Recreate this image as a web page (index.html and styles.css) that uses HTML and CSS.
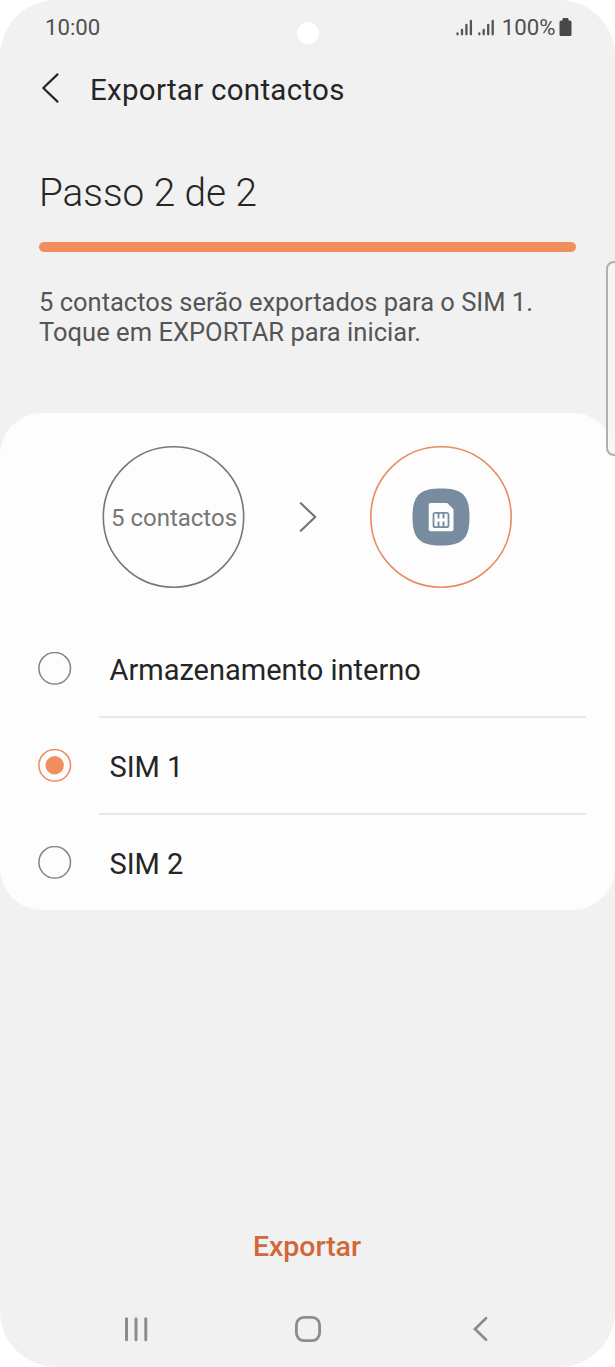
FILE: index.html
```html
<!DOCTYPE html>
<html lang="pt">
<head>
<meta charset="utf-8">
<title>Exportar contactos</title>
<link rel="stylesheet" href="styles.css">
</head>
<body>
<div class="phone">
  <div class="status">
    <span class="time">10:00</span>
    <div class="status-right">
      <svg class="signals" width="38" height="18" viewBox="0 0 38 18" fill="none" stroke="#555" stroke-width="2.300" stroke-linecap="round">
        <path d="M1.500 14.500v.800M6 10.800v4.500M10.400 6v9.300M14.900 2v13.300M23.300 14.500v.800M27.700 10.800v4.500M32.200 6v9.300M36.700 2v13.300"/>
      </svg>
      <span class="percent">100%</span>
      <svg class="battery" width="13" height="18" viewBox="0 0 13 18" fill="#474747">
        <path d="M4.500 0h4q1 0 1 1v1.500h1.500q1.500 0 1.500 1.500v12.500q0 1.500-1.500 1.500H2Q.5 18 .5 16.500V4Q.5 2.500 2 2.500h1.500V1q0-1 1-1z"/>
      </svg>
    </div>
  </div>
  <header class="header">
    <svg class="back" width="19" height="32" viewBox="0 0 19 32" fill="none" stroke="#252525" stroke-width="2.200" stroke-linecap="round" stroke-linejoin="round"><path d="M16.500 2.400 2.300 16l14.200 13.600"/></svg>
    <h1 class="title">Exportar contactos</h1>
  </header>
  <section class="intro">
    <h2 class="step">Passo 2 de 2</h2>
    <div class="progress"></div>
    <p class="desc"><span class="line">5 contactos serão exportados para o SIM 1.</span><span class="line line-b">Toque em EXPORTAR para iniciar.</span></p>
  </section>
  <main class="card">
    <div class="transfer">
      <div class="circle">
        <svg class="ring" width="143" height="142" viewBox="0 0 143 142"><circle cx="71.500" cy="71" r="70.200" fill="none" stroke="#777" stroke-width="1.600"/></svg>
        <span class="count">5 contactos</span>
      </div>
      <svg class="arrow" width="20" height="32" viewBox="0 0 20 32" fill="none" stroke="#727272" stroke-width="2.100" stroke-linecap="round" stroke-linejoin="round"><path d="M2.800 2.300 17.200 16 2.800 29.700"/></svg>
      <div class="circle">
        <svg class="ring" width="142" height="142" viewBox="0 0 142 142"><circle cx="71" cy="71" r="70.200" fill="none" stroke="#e98b60" stroke-width="1.600"/></svg>
        <svg class="sim" width="58" height="58" viewBox="0 0 58 58">
          <path fill="#798b9f" d="M29 .5C50.500.5 57.500 7.500 57.500 29S50.500 57.500 29 57.500.5 50.500.5 29 7.500.5 29 .5z"/>
          <path fill="#fcfdff" d="M18.700 15h16.500l6.300 6.300V41.200q0 2-2 2H18.700q-2 0-2-2V17q0-2 2-2z"/>
          <rect x="21.500" y="24.800" width="15" height="14.400" rx="2" fill="none" stroke="#798b9f" stroke-width="1.800"/>
          <path d="M26.500 25v5.400M31.500 25v5.400M26.500 33.400V39M31.500 33.400V39" fill="none" stroke="#798b9f" stroke-width="1.900"/>
        </svg>
      </div>
    </div>
    <ul class="options">
      <li class="option">
        <svg class="radio" width="34" height="34" viewBox="0 0 34 34"><circle class="radio-ring" cx="16.700" cy="16.300" r="15.800"/></svg>
        <span class="label">Armazenamento interno</span>
      </li>
      <li class="option checked">
        <svg class="radio" width="34" height="34" viewBox="0 0 34 34"><circle class="radio-ring" cx="16.700" cy="16.300" r="15.800"/><circle class="radio-dot" cx="16.700" cy="16.300" r="9.200"/></svg>
        <span class="label">SIM 1</span>
      </li>
      <li class="option">
        <svg class="radio" width="34" height="34" viewBox="0 0 34 34"><circle class="radio-ring" cx="16.700" cy="16.300" r="15.800"/></svg>
        <span class="label">SIM 2</span>
      </li>
    </ul>
  </main>
  <div class="action"><span class="export">Exportar</span></div>
  <nav class="nav">
    <svg width="26" height="28" viewBox="0 0 26 28" fill="none" stroke="#8c8c8c" stroke-width="3" stroke-linecap="round"><path d="M3.500 3.800v20.900M13 3.800v20.900M22.800 3.800v20.900"/></svg>
    <svg width="28" height="28" viewBox="0 0 28 28" fill="none" stroke="#8c8c8c" stroke-width="2.800"><rect x="2.400" y="2.400" width="23.200" height="23.200" rx="7.500"/></svg>
    <svg width="26" height="28" viewBox="0 0 26 28" fill="none" stroke="#8c8c8c" stroke-width="2.700" stroke-linecap="round" stroke-linejoin="miter"><path d="M19 3.200 8 14l11 10.800"/></svg>
  </nav>
  <span class="camera"></span>
  <span class="edge-handle"></span>
</div>
</body>
</html>
```
FILE: styles.css
```css
* { box-sizing: border-box; margin: 0; padding: 0; }
body { background: #fff; font-family: Roboto, "Liberation Sans", sans-serif; color: #252525; }
svg { display: block; flex: none; }
.phone {
  position: relative;
  width: 615px;
  height: 1367px;
  overflow: hidden;
  display: flex;
  flex-direction: column;
  background: #f1f1f1;
  border-radius: 56px;
}
.status {
  height: 55px;
  padding: 0 43px 0 45px;
  display: flex;
  justify-content: space-between;
  align-items: center;
  font-size: 22.200px;
  line-height: 25px;
  color: #4f4f4f;
}
.status-right { display: flex; align-items: center; }
.battery { margin-top: -2px; }
.percent { margin: 0 3.500px 0 7.500px; }
.header { height: 66px; padding-left: 41px; display: flex; align-items: center; }
.title { margin: 4px 0 0 30px; font-size: 29.500px; letter-spacing: .28px; font-weight: 400; line-height: 36px; }
.intro { height: 292px; padding: 48px 39px 0 39px; }
.step { font-size: 38.700px; font-weight: 300; line-height: 48px; }
.progress { margin-top: 25px; height: 10px; border-radius: 5px; background: #f08e60; }
.desc { margin-top: 35px; font-size: 25.500px; line-height: 30.300px; color: #555; }
.line { display: block; white-space: nowrap; }
.line-b { letter-spacing: .03px; }
.card { height: 497px; background: #fdfdfd; border-radius: 42px; padding-top: 33px; }
.transfer { height: 142px; padding: 0 103px 0 102px; display: flex; align-items: center; justify-content: space-between; }
.circle { width: 142px; height: 142px; display: grid; place-items: center; }
.circle > * { grid-area: 1 / 1; }
.arrow { margin-left: 2px; }
.count { margin: 2px 0 0 1px; font-size: 24px; line-height: 30px; color: #777; white-space: nowrap; }
.options { margin-top: 32px; list-style: none; }
.option { height: 97px; padding-left: 38px; display: flex; align-items: center; }
.radio-ring { fill: none; stroke: #858585; stroke-width: 1.500px; }
.checked .radio-ring { stroke: #ed8b5d; }
.radio-dot { fill: #f08e60; }
.label { height: 97px; flex: 1; margin: 2px 29px 0 27px; padding-left: 10.500px; font-size: 29px; line-height: 98px; border-bottom: 2px solid #e8e8e8; }
.option:last-child .label { border-bottom: 0; }
.action { margin-top: 301px; height: 70px; display: flex; justify-content: center; align-items: center; }
.export { margin-right: 1px; font-size: 28.500px; font-weight: 500; letter-spacing: -.05px; color: #d1673a; }
.nav { margin-top: 34px; padding: 0 122px 0 123px; display: flex; justify-content: space-between; }
.camera { position: absolute; left: 297px; top: 22px; width: 22px; height: 22px; border-radius: 50%; background: #fff; }
.edge-handle { position: absolute; left: 606px; top: 261px; width: 20px; height: 195px; border: 2px solid #b0b0b0; border-radius: 8px; background: rgba(245, 245, 245, .75); }
```
